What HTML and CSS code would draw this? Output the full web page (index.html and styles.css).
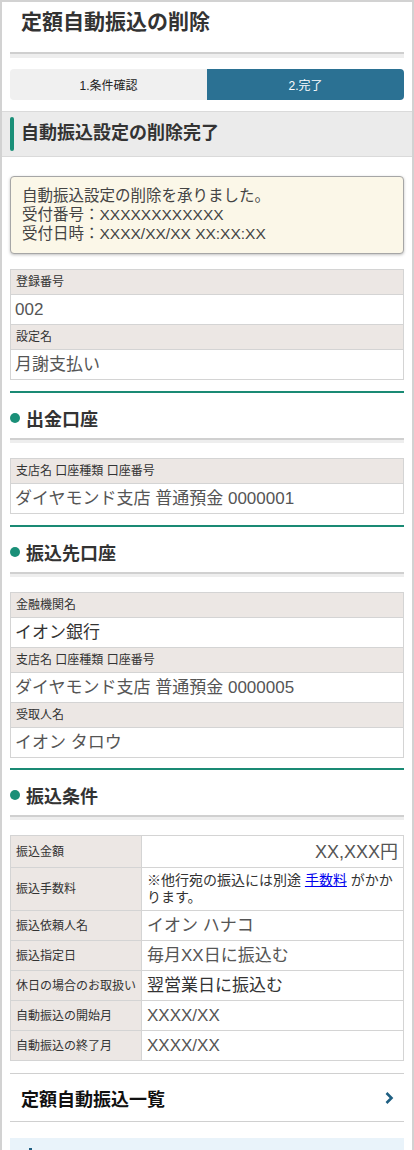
FILE: index.html
```html
<!DOCTYPE html>
<html lang="ja">
<head>
    <meta charset="UTF-8">
    <meta name="viewport" content="width=device-width, initial-scale=1.0">
    <link rel="stylesheet" href="styles.css">
    <title>定額自動振込の削除</title>
</head>
<body>
<div class="frame">

    <h1 class="page-title">定額自動振込の削除</h1>
    <div class="title-rule"></div>

    <div class="steps">
        <div class="step">1.条件確認</div>
        <div class="step current">2.完了</div>
    </div>

    <h2 class="section-head">自動振込設定の削除完了</h2>

    <div class="content">
        <div class="notice">
            <p>自動振込設定の削除を承りました。</p>
            <p>受付番号：XXXXXXXXXXXX</p>
            <p>受付日時：XXXX/XX/XX XX:XX:XX</p>
        </div>

        <dl class="stack">
            <dt>登録番号</dt>
            <dd>002</dd>
            <dt>設定名</dt>
            <dd>月謝支払い</dd>
        </dl>

        <h3 class="sub-head"><span class="dot"></span>出金口座</h3>
        <div class="sub-rule"></div>
        <dl class="stack">
            <dt>支店名 口座種類 口座番号</dt>
            <dd>ダイヤモンド支店 普通預金 0000001</dd>
        </dl>

        <h3 class="sub-head"><span class="dot"></span>振込先口座</h3>
        <div class="sub-rule"></div>
        <dl class="stack">
            <dt>金融機関名</dt>
            <dd class="dark">イオン銀行</dd>
            <dt>支店名 口座種類 口座番号</dt>
            <dd>ダイヤモンド支店 普通預金 0000005</dd>
            <dt>受取人名</dt>
            <dd>イオン タロウ</dd>
        </dl>

        <h3 class="sub-head tight"><span class="dot"></span>振込条件</h3>
        <div class="sub-rule"></div>
        <table class="terms">
            <tr class="tall">
                <th>振込金額</th>
                <td class="amount">XX,XXX円</td>
            </tr>
            <tr>
                <th>振込手数料</th>
                <td class="note">※他行宛の振込には別途 <a href="#">手数料</a> がかかります。</td>
            </tr>
            <tr>
                <th>振込依頼人名</th>
                <td>イオン ハナコ</td>
            </tr>
            <tr>
                <th>振込指定日</th>
                <td>毎月XX日に振込む</td>
            </tr>
            <tr>
                <th>休日の場合のお取扱い</th>
                <td class="dark">翌営業日に振込む</td>
            </tr>
            <tr>
                <th>自動振込の開始月</th>
                <td>XXXX/XX</td>
            </tr>
            <tr>
                <th>自動振込の終了月</th>
                <td>XXXX/XX</td>
            </tr>
        </table>

        <a class="link-row" href="#">
            <span>定額自動振込一覧</span>
            <svg width="10" height="14" viewBox="0 0 10 14">
                <polyline points="2.5,2 7.5,7 2.5,12" fill="none" stroke="#1f5f82" stroke-width="2.6"/>
            </svg>
        </a>

        <div class="info-box">
            <span class="info-mark"></span>
        </div>
    </div>

</div>
</body>
</html>
```

FILE: styles.css
```css
body {
    margin: 0;
    font-family: "Liberation Sans", "Noto Sans CJK JP", sans-serif;
    color: #333;
}

.frame {
    border: 2px solid #d2d2d2;
    border-bottom: none;
    min-height: 1148px;
}

.page-title {
    margin: 0;
    padding: 5px 19px 15px;
    font-size: 21px;
    line-height: 30px;
    font-weight: bold;
}

.title-rule {
    margin: 0 8px;
    border-top: 2px solid #cfcfcf;
    height: 4px;
    background-color: #eeeeee;
}

.steps {
    display: flex;
    margin: 11px 8px 0;
    height: 31px;
    border-radius: 4px;
    overflow: hidden;
}

.step {
    flex: 1;
    display: flex;
    align-items: center;
    justify-content: center;
    background-color: #f0f0f0;
    font-size: 12px;
    color: #222;
}

.step.current {
    background-color: #2b7193;
    color: #fff;
}

.section-head {
    position: relative;
    margin: 11px 0 0;
    height: 44px;
    padding-left: 19px;
    background-color: #ebebeb;
    border-top: 1px solid #dadada;
    border-bottom: 1px solid #dadada;
    font-size: 18px;
    line-height: 43px;
    font-weight: bold;
}

.section-head::before {
    content: "";
    position: absolute;
    left: 8px;
    top: 5px;
    width: 4px;
    height: 34px;
    border-radius: 2px;
    background-color: #1a8f78;
}

.content {
    padding: 0 8px;
}

.notice {
    margin-top: 19px;
    padding: 9px 10px 10px 11px;
    background-color: #fbf7e8;
    border: 1px solid #a6a6a6;
    border-radius: 4px;
    box-shadow: 0 1px 3px rgba(0, 0, 0, 0.25);
    font-size: 15.5px;
    color: #444;
}

.notice p {
    margin: 0;
    height: 19px;
    line-height: 19px;
}

.stack {
    margin: 15px 0 0;
    border: 1px solid #d4d4d4;
    border-top: none;
}

.stack dt {
    height: 24px;
    padding-left: 5px;
    border-top: 1px solid #d4d4d4;
    background-color: #ece7e4;
    font-size: 12px;
    line-height: 25px;
}

.stack dd {
    margin: 0;
    height: 29px;
    padding-left: 4px;
    border-top: 1px solid #d4d4d4;
    font-size: 17px;
    line-height: 29px;
    color: #555;
}

.stack dd.dark,
.terms td.dark {
    color: #333;
}

.sub-head {
    display: flex;
    align-items: center;
    gap: 6px;
    margin: 11px 0 0;
    padding-top: 4px;
    height: 41px;
    border-top: 2px solid #1a8a74;
    font-size: 18px;
    font-weight: bold;
}

.sub-head.tight {
    margin-top: 10px;
}

.dot {
    width: 10px;
    height: 10px;
    border-radius: 50%;
    background-color: #1a8f78;
}

.sub-rule {
    border-top: 2px solid #d0d0d0;
    height: 3px;
    background-color: #eeeeee;
}

.terms {
    width: 100%;
    margin-top: 15px;
    border-collapse: collapse;
}

.terms th,
.terms td {
    border: 1px solid #d4d4d4;
    height: 29px;
    padding: 0 5px;
    line-height: 20px;
}

.terms th {
    width: 120px;
    background-color: #ece7e4;
    font-size: 12px;
    font-weight: normal;
    text-align: left;
}

.terms td {
    font-size: 17px;
    color: #555;
}

.terms tr.tall td,
.terms tr.tall th {
    height: 31px;
}

.terms td.amount {
    text-align: right;
    font-size: 18px;
}

.terms td.note {
    padding: 4px 5px 4px;
    font-size: 14px;
    line-height: 17px;
    color: #333;
}

.terms td.note a {
    color: #0000ee;
}

.link-row {
    display: flex;
    align-items: center;
    justify-content: space-between;
    margin-top: 12px;
    height: 47px;
    padding: 0 10px 0 11px;
    border-top: 1px solid #d0d0d0;
    border-bottom: 1px solid #d0d0d0;
    font-size: 18px;
    font-weight: bold;
    color: #111;
    text-decoration: none;
}

.info-box {
    margin-top: 16px;
    height: 40px;
    padding: 10px 19px;
    background-color: #e9f3fa;
}

.info-mark {
    display: block;
    width: 3px;
    height: 14px;
    background-color: #1f5f82;
}
```
